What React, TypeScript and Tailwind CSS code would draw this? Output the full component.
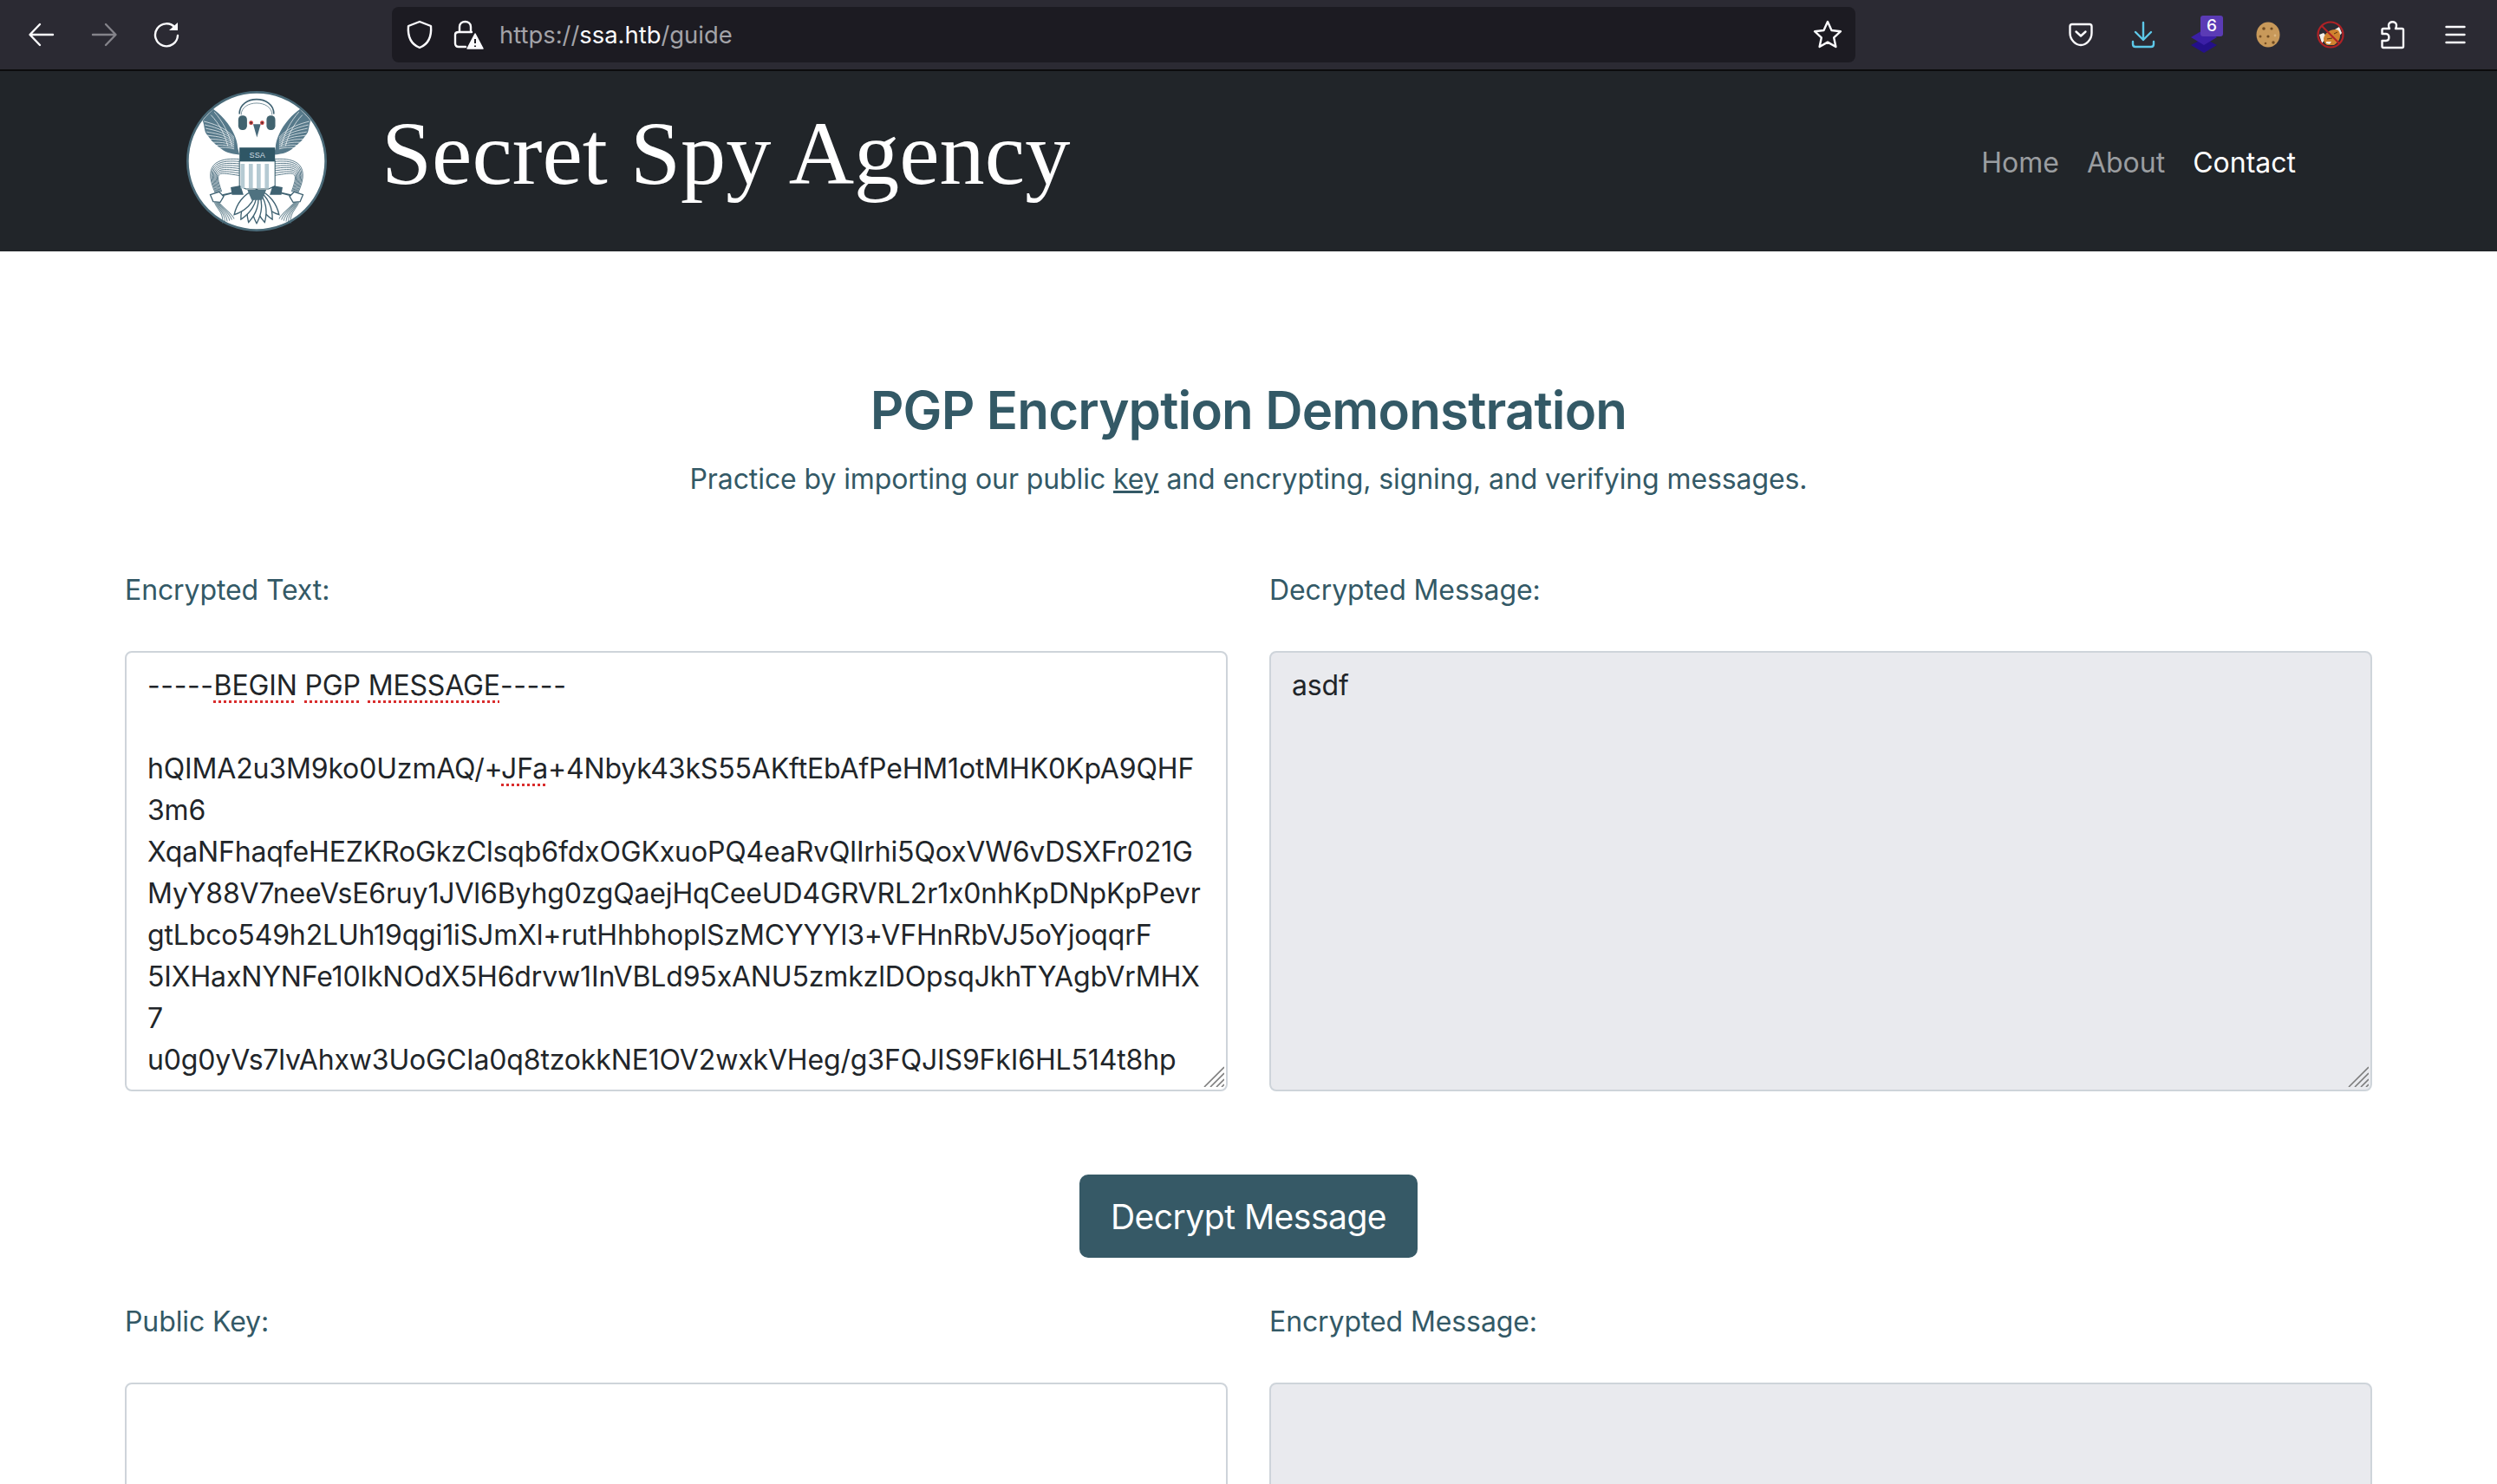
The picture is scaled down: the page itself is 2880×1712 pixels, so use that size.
const wingLines = [0, 1, 2, 3, 4, 5, 6, 7, 8];
const cables = [0, 1, 2, 3, 4, 5, 6, 7];
const tailLeaves = [-42, -28, -14, 0, 14, 28, 42];

function Logo() {
  const side = (
    <g>
      {/* wing */}
      <path
        d="M252 240 C 250 205, 225 150, 168 108 C 160 118, 150 125, 132 148 C 140 170, 135 185, 150 200 C 160 215, 170 225, 190 240 C 205 255, 225 262, 258 265 Z"
        fill="#56798a"
      />
      {wingLines.map((i) => (
        <path
          key={i}
          d={`M${136 + i * 3} ${150 + i * 12} C ${165 + i} ${158 + i * 11}, ${205 - i} ${168 + i * 8}, ${240} ${205 + i * 5}`}
          fill="none"
          stroke="#ffffff"
          strokeWidth="2"
        />
      ))}
      <path d="M172 118 C 200 150, 222 190, 232 235" fill="none" stroke="#ffffff" strokeWidth="2" />
      <path d="M160 128 C 190 160, 208 195, 218 235" fill="none" stroke="#ffffff" strokeWidth="2" />
      {/* cables */}
      {cables.map((i) => (
        <path
          key={i}
          d={`M258 ${280 + i * 8} C ${205 - i * 3} ${276 + i * 7}, ${122 + i * 7} ${282 + i * 5}, ${176 + i * 3} ${398 - i}`}
          fill="none"
          stroke="#45687a"
          strokeWidth="2.6"
        />
      ))}
      <path d="M228 376 L262 370 L272 402 L232 402 Z" fill="#3f6272" />
      {/* claw */}
      <path
        d="M158 402 L188 392 L204 408 L192 428 L168 426 Z"
        fill="#ffffff"
        stroke="#3f6272"
        strokeWidth="4"
      />
      <path d="M200 404 L232 396" stroke="#3f6272" strokeWidth="6" />
      {/* tassel */}
      {[0, 1, 2, 3, 4, 5].map((i) => (
        <path
          key={i}
          d={`M${172 + i * 3} 428 C ${180 + i * 5} 450, ${205 + i * 5} 465, ${200 + i * 8} ${500 - i * 3}`}
          fill="none"
          stroke="#4f7280"
          strokeWidth="3"
          opacity={0.8}
        />
      ))}
    </g>
  );
  return (
    <svg width="162" height="162" viewBox="76 46 482 482" className="shrink-0 -ml-[1px]">
      <circle cx="317" cy="287" r="237" fill="#ffffff" stroke="#4a6a78" strokeWidth="8" />
      {side}
      <g transform="translate(634 0) scale(-1 1)">{side}</g>
      {/* tail */}
      {tailLeaves.map((a) => (
        <path
          key={a}
          d="M317 385 C 290 425, 300 470, 317 500 C 334 470, 344 425, 317 385 Z"
          fill="#ffffff"
          stroke="#3f6272"
          strokeWidth="4"
          transform={`rotate(${a} 317 385)`}
        />
      ))}
      <path d="M285 385 L350 385 L335 420 L300 420 Z" fill="#4f7280" />
      {/* headphones */}
      <path d="M258 125 C 258 58, 376 58, 376 125" fill="none" stroke="#3f6272" strokeWidth="5" />
      <path d="M264 128 C 264 74, 370 74, 370 128" fill="none" stroke="#3f6272" strokeWidth="2" />
      {/* head */}
      <path d="M278 235 L276 150 C 285 118, 350 118, 358 150 L360 235 Z" fill="#ffffff" />
      <rect x="254" y="130" width="30" height="50" rx="14" fill="#41636f" />
      <rect x="351" y="130" width="30" height="50" rx="14" fill="#41636f" />
      <path d="M305 160 L331 160 L318 205 Z" fill="#47697a" />
      <circle cx="298" cy="155" r="7" fill="#c23a3a" />
      <circle cx="336" cy="155" r="7" fill="#c23a3a" />
      <circle cx="298" cy="155" r="2.5" fill="#2b2b2b" />
      <circle cx="336" cy="155" r="2.5" fill="#2b2b2b" />
      {/* shield */}
      <path d="M258 285 H380 V372 L358 382 H280 L258 372 Z" fill="#ffffff" stroke="#2f5665" strokeWidth="3" />
      {[262, 290, 317, 345].map((x) => (
        <rect key={x} x={x} y="296" width="14" height="84" fill="#b5cad3" />
      ))}
      <rect x="258" y="240" width="122" height="48" fill="#2f5665" />
      <text
        x="319"
        y="274"
        textAnchor="middle"
        fontSize="27"
        fill="#cfdde3"
        fontFamily="'Liberation Sans', sans-serif"
      >
        SSA
      </text>
    </svg>
  );
}

function Back({ muted }: { muted?: boolean }) {
  return (
    <svg width="32" height="32" viewBox="0 0 32 32" fill="none" stroke={muted ? "#84838a" : "#fbfbfe"} strokeWidth="2.4" strokeLinecap="round" strokeLinejoin="round">
      {muted ? (
        <path d="M3 16 H29 M18 4 L29.5 16 L18 28" />
      ) : (
        <path d="M29 16 H3 M14 4 L2.5 16 L14 28" />
      )}
    </svg>
  );
}

function Reload() {
  return (
    <svg width="32" height="32" viewBox="0 0 32 32" fill="none">
      <path d="M26 8 A 13 13 0 1 0 29 17" stroke="#fbfbfe" strokeWidth="2.4" strokeLinecap="round" />
      <path d="M19 11 H29 V2 Z" fill="#fbfbfe" />
    </svg>
  );
}

function Shield() {
  return (
    <svg width="32" height="36" viewBox="0 0 32 36" fill="none">
      <path d="M16 3 L29 8 C 30 20, 26 29, 16 33 C 6 29, 2 20, 3 8 Z" stroke="#fbfbfe" strokeWidth="2.4" strokeLinejoin="round" />
    </svg>
  );
}

function Lock() {
  return (
    <svg width="36" height="36" viewBox="0 0 36 36" fill="none">
      <path d="M8 15 V9 C 8 1, 21 1, 21 9 V15" stroke="#fbfbfe" strokeWidth="2.4" />
      <path d="M15 32 H7 C 4.5 32, 3 31, 3 28 V18 C 3 16, 4.5 15, 7 15 H22" stroke="#fbfbfe" strokeWidth="2.4" strokeLinecap="round" />
      <path d="M26 17 L35 34 H17 Z" fill="#fbfbfe" stroke="#fbfbfe" strokeWidth="1.5" strokeLinejoin="round" />
      <path d="M26 23 V28 M26 30.5 V32" stroke="#1c1b22" strokeWidth="2" />
    </svg>
  );
}

function Star() {
  return (
    <svg width="36" height="36" viewBox="0 0 36 36" fill="none">
      <path d="M18 3 L22.5 13 L33 14.2 L25.2 21.4 L27.4 32 L18 26.6 L8.6 32 L10.8 21.4 L3 14.2 L13.5 13 Z" stroke="#fbfbfe" strokeWidth="2.4" strokeLinejoin="round" />
    </svg>
  );
}

function Pocket() {
  return (
    <svg width="28" height="28" viewBox="0 0 28 28" fill="none" stroke="#fbfbfe" strokeWidth="2.4" strokeLinecap="round" strokeLinejoin="round">
      <path d="M4 2 H24 C 25.5 2, 26.5 3, 26.5 4.5 V12 C 26.5 20, 20 26, 14 26 C 8 26, 1.5 20, 1.5 12 V4.5 C 1.5 3, 2.5 2, 4 2 Z" />
      <path d="M8.5 10.5 L14 15.5 L19.5 10.5" />
    </svg>
  );
}

function Download() {
  return (
    <svg width="28" height="32" viewBox="0 0 28 32" fill="none" stroke="#5dc8e8" strokeWidth="2.4" strokeLinecap="round" strokeLinejoin="round">
      <path d="M14 2 V22 M5 13 L14 22 L23 13" />
      <path d="M2 24 V27 C 2 29, 3 30, 5 30 H23 C 25 30, 26 29, 26 27 V24" />
    </svg>
  );
}

function Layers() {
  return (
    <div className="relative w-[36px] h-[42px]">
      <svg width="32" height="30" viewBox="0 0 32 30" className="mt-[13px]">
        <path d="M16 12 L31 20 L16 29 L1 20 Z" fill="#24108a" />
        <path d="M16 2 L31 11 L16 20 L1 11 Z" fill="#3b1fa6" />
      </svg>
      <span className="absolute left-[12px] -top-[1px] w-[26px] h-[24px] rounded-[3px] bg-[#5b3bb5] text-[#fbfbfe] text-[19px] leading-[24px] text-center font-medium">
        6
      </span>
    </div>
  );
}

function Cookie() {
  return (
    <svg width="28" height="30" viewBox="0 0 28 30">
      <ellipse cx="14" cy="15" rx="13.5" ry="14.5" fill="#c8995a" />
      <circle cx="9" cy="8" r="1.8" fill="#6e4a22" />
      <circle cx="18" cy="8" r="1.6" fill="#6e4a22" />
      <circle cx="5" cy="17" r="1.5" fill="#7a5228" />
      <circle cx="14" cy="17" r="1.6" fill="#6e4a22" />
      <circle cx="20" cy="24" r="1.7" fill="#6e4a22" />
      <circle cx="11" cy="25" r="1.3" fill="#7a5228" />
      <circle cx="22" cy="16" r="1.4" fill="#dcb680" />
    </svg>
  );
}

function Fox() {
  return (
    <svg width="32" height="32" viewBox="0 0 32 32">
      <circle cx="16" cy="16" r="15" fill="#2b2a33" />
      <path d="M3 16 L8 14 L12 19 L6 26 Z" fill="#f4f0ea" />
      <path d="M29 14 L26 7 L21 10 L24 20 Z" fill="#f4f0ea" />
      <path d="M8 20 C 10 12, 20 8, 25 11 C 29 16, 27 24, 20 28 L12 28 C 9 26, 8 24, 8 20 Z" fill="#d0832f" />
      <path d="M11 24 L17 24 L15 27 L11 26 Z" fill="#f4f0ea" />
      <path d="M12 21 L18 20 M20 15 L24 13" stroke="#5b3510" strokeWidth="1" />
      <circle cx="16" cy="16" r="14.5" fill="none" stroke="#b02226" strokeWidth="2.2" />
      <path d="M6 6 L26 26" stroke="#b02226" strokeWidth="2.2" />
    </svg>
  );
}

function Puzzle() {
  return (
    <svg width="28" height="34" viewBox="0 0 28 34" fill="none" stroke="#fbfbfe" strokeWidth="2.4" strokeLinejoin="round">
      <path d="M3 32 C 2 32, 1.5 31.5, 1.5 30.5 V24 H6 C 10.5 24, 10.5 16, 6 16 H1.5 V11.5 C 1.5 10.5, 2 10, 3 10 H10 C 9 8.5, 9 7, 9 6 C 9 1, 18 1, 18 6 C 18 7, 18 8.5, 17 10 H24.5 C 25.5 10, 26 10.5, 26 11.5 V30.5 C 26 31.5, 25.5 32, 24.5 32 Z" />
    </svg>
  );
}

function Menu() {
  return (
    <svg width="24" height="22" viewBox="0 0 24 22" stroke="#fbfbfe" strokeWidth="2.4" strokeLinecap="round">
      <path d="M1.5 2 H22.5 M1.5 11 H22.5 M1.5 20 H22.5" />
    </svg>
  );
}

function Resizer() {
  return (
    <svg width="24" height="24" viewBox="0 0 24 24" className="absolute right-[2px] bottom-[3px]" stroke="#7d7d7d" strokeWidth="1.6">
      <path d="M1 24 L24 1 M8 24 L24 8 M15 24 L24 15 M21 24 L24 21" />
    </svg>
  );
}

function Box({ children, disabled, resize = true, height }: { children?: React.ReactNode; disabled?: boolean; resize?: boolean; height: string }) {
  return (
    <div
      className={
        disabled
          ? `relative ${height} overflow-hidden rounded-[8px] border-2 border-[#ced4da] bg-[#e9eaee] px-[24px] pt-[14px] pb-[10px] text-[32px] leading-[48px] tracking-[-0.15px] text-[#212529] whitespace-pre`
          : `relative ${height} overflow-hidden rounded-[8px] border-2 border-[#ced4da] bg-white px-[24px] pt-[14px] pb-[10px] text-[32px] leading-[48px] tracking-[-0.15px] text-[#212529] whitespace-pre`
      }
    >
      {children}
      {resize && <Resizer />}
    </div>
  );
}

function Miss({ children }: { children: React.ReactNode }) {
  return (
    <span className="underline decoration-dotted decoration-[#d92c2c] decoration-[3px] underline-offset-[6px]">
      {children}
    </span>
  );
}

function Dashes() {
  return <span className="tracking-[0.6px]">-----</span>;
}

export default function App() {
  return (
    <div className="h-[1712px] overflow-hidden bg-white font-['Inter',sans-serif] [font-feature-settings:'calt'_0]">
      {/* browser toolbar */}
      <div className="flex h-[82px] items-center border-b-2 border-[#0c0c0d] bg-[#2b2a33]">
        <div className="ml-[12px] flex w-[440px] items-center">
          <div className="flex w-[72px] justify-center"><Back /></div>
          <div className="flex w-[72px] justify-center"><Back muted /></div>
          <div className="flex w-[72px] justify-center"><Reload /></div>
        </div>
        <div className="flex h-[64px] w-[1688px] items-center rounded-[8px] bg-[#1c1b22] pl-[16px] pr-[14px]">
          <Shield />
          <div className="ml-[22px]"><Lock /></div>
          <span className="ml-[18px] mt-[2px] text-[27.4px] text-[#a3a3a8]">
            https://<span className="text-[#fbfbfe]">ssa.htb</span>/guide
          </span>
          <div className="ml-auto"><Star /></div>
        </div>
        <div className="ml-[224px] flex items-center">
          <div className="flex w-[72px] justify-center"><Pocket /></div>
          <div className="flex w-[72px] justify-center"><Download /></div>
          <div className="flex w-[72px] justify-center"><Layers /></div>
          <div className="flex w-[72px] justify-center"><Cookie /></div>
          <div className="flex w-[72px] justify-center"><Fox /></div>
          <div className="flex w-[72px] justify-center"><Puzzle /></div>
          <div className="flex w-[72px] justify-center"><Menu /></div>
        </div>
      </div>

      {/* site nav */}
      <nav className="flex h-[208px] items-center bg-[#212529] pl-[216px] pr-[216px]">
        <Logo />
        <span className="ml-[63px] font-['Liberation_Serif',serif] text-[104.4px] leading-none text-white -mt-[17px]">
          Secret Spy Agency
        </span>
        <div className="ml-auto flex text-[32px] leading-[48px] text-[#9a9da0] mt-[4px]">
          <a className="px-[16px]">Home</a>
          <a className="px-[16px]">About</a>
          <a className="px-[16px] text-white">Contact</a>
        </div>
      </nav>

      <main className="px-[144px] pt-[150px] text-[#335966]">
        <h2 className="text-center text-[60px] font-semibold leading-[67px] tracking-[-0.85px]">
          PGP Encryption Demonstration
        </h2>
        <p className="mt-[22px] text-center text-[32px] leading-[48px] tracking-[-0.1px]">
          Practice by importing our public <span className="underline">key</span> and encrypting, signing, and verifying messages.
        </p>

        <div className="mt-[80px] grid grid-cols-2 gap-x-[48px]">
          <div>
            <label className="block text-[32px] leading-[48px] tracking-[-0.1px]">Encrypted Text:</label>
            <div className="mt-[46px]">
              <Box height="h-[508px]">
                <Dashes /><Miss>BEGIN</Miss> <Miss>PGP</Miss> <Miss>MESSAGE</Miss><Dashes />{"\n\n"}
                {"hQIMA2u3M9ko0UzmAQ/+"}<Miss>JFa</Miss>{"+4Nbyk43kS55AKftEbAfPeHM1otMHK0KpA9QHF\n"}
                {"3m6\n"}
                {"XqaNFhaqfeHEZKRoGkzClsqb6fdxOGKxuoPQ4eaRvQlIrhi5QoxVW6vDSXFr021G\n"}
                {"MyY88V7neeVsE6ruy1JVl6Byhg0zgQaejHqCeeUD4GRVRL2r1x0nhKpDNpKpPevr\n"}
                {"gtLbco549h2LUh19qgi1iSJmXl+rutHhbhoplSzMCYYYl3+VFHnRbVJ5oYjoqqrF\n"}
                {"5IXHaxNYNFe10IkNOdX5H6drvw1InVBLd95xANU5zmkzlDOpsqJkhTYAgbVrMHX\n"}
                {"7\n"}
                {"u0g0yVs7lvAhxw3UoGCIa0q8tzokkNE1OV2wxkVHeg/g3FQJIS9FkI6HL514t8hp"}
              </Box>
            </div>
          </div>
          <div>
            <label className="block text-[32px] leading-[48px] tracking-[-0.1px]">Decrypted Message:</label>
            <div className="mt-[46px]">
              <Box height="h-[508px]" disabled>asdf</Box>
            </div>
          </div>
        </div>

        <div className="mt-[96px] flex justify-center">
          <button className="h-[96px] w-[390px] rounded-[10px] bg-[#365966] pt-[2px] text-[39px] leading-[60px] tracking-[-0.5px] text-white">
            Decrypt Message
          </button>
        </div>

        <div className="mt-[50px] grid grid-cols-2 gap-x-[48px]">
          <div>
            <label className="block text-[32px] leading-[48px] tracking-[-0.1px]">Public Key:</label>
            <div className="mt-[46px]"><Box height="h-[508px]" resize={false} /></div>
          </div>
          <div>
            <label className="block text-[32px] leading-[48px] tracking-[-0.1px]">Encrypted Message:</label>
            <div className="mt-[46px]"><Box height="h-[508px]" resize={false} disabled /></div>
          </div>
        </div>
      </main>
    </div>
  );
}
